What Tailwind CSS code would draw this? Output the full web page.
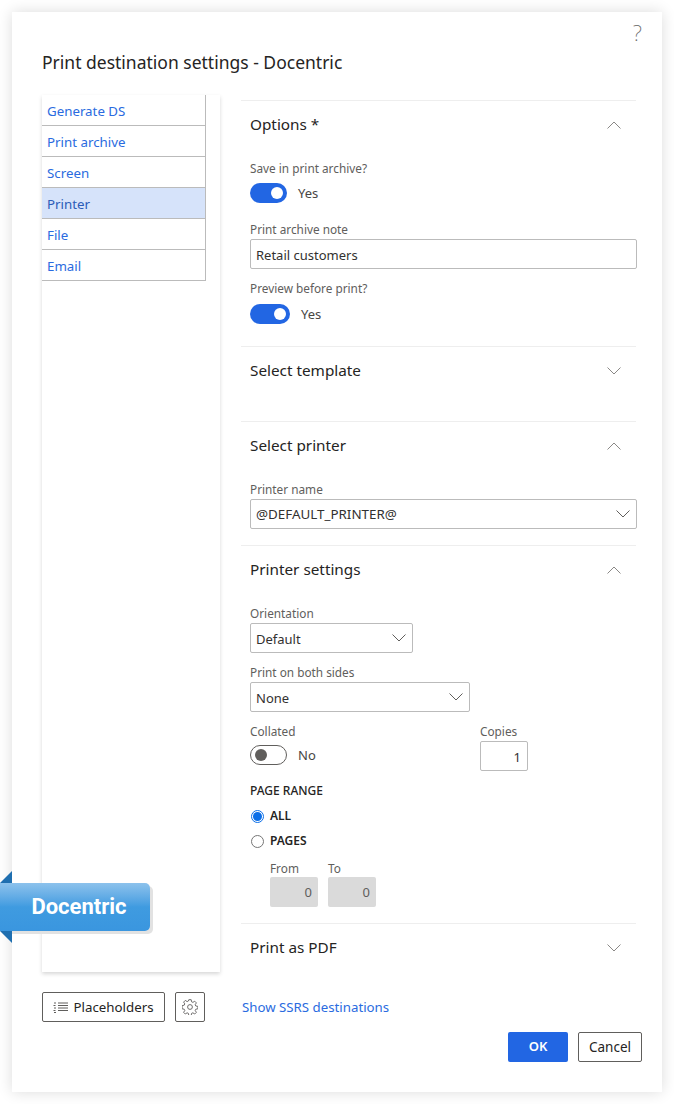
<!DOCTYPE html>
<html lang="en">
<head>
	<meta charset="UTF-8">
	<meta name="viewport" content="width=device-width, initial-scale=1.0">
	<title>Print destination settings - Docentric</title>
	<script src="https://cdn.jsdelivr.net/npm/@tailwindcss/browser@4"></script>
</head>
<body class="relative w-[674px] h-[1104px] bg-white overflow-hidden font-['Noto_Sans','Open_Sans',sans-serif] text-[13px] text-[#323130]">
	<!-- Dialog -->
	<div class="absolute left-[12px] top-[12px] w-[650px] h-[1080px] bg-white shadow-[0_0_14px_rgba(0,0,0,0.14)]">
		<div class="flex justify-end h-[38px] pr-[20px] pt-[6px]">
			<span class="font-extralight text-[22px] leading-[28px] text-[#666]">?</span>
		</div>
		<h1 class="pl-[30px] h-[45px] text-[17.5px] leading-[24px] text-[#252423]">Print destination settings - Docentric</h1>

		<div class="flex pl-[30px] h-[877px]">
			<!-- Destinations -->
			<div class="w-[178px] h-[877px] shadow-[0_2px_4px_rgba(0,0,0,0.16)]">
				<ul class="w-[164px] border-r border-[#bbb] text-[#2a6be0] text-[13.3px]">
					<li class="h-[31px] pl-[5px] leading-[32px] border-b border-[#bbb]">Generate DS</li>
					<li class="h-[31px] pl-[5px] leading-[32px] border-b border-[#bbb]">Print archive</li>
					<li class="h-[31px] pl-[5px] leading-[32px] border-b border-[#bbb]">Screen</li>
					<li class="h-[31px] pl-[5px] leading-[32px] border-b border-[#bbb] bg-[#d6e3fa] text-[#2b5cb8]">Printer</li>
					<li class="h-[31px] pl-[5px] leading-[32px] border-b border-[#bbb]">File</li>
					<li class="h-[31px] pl-[5px] leading-[32px] border-b border-[#bbb]">Email</li>
				</ul>
			</div>

			<!-- Sections -->
			<div class="ml-[21px] w-[395px] pt-[5px]">
				<section class="h-[246px] border-t border-[#eee] pl-[9px]">
					<div class="flex justify-between items-center h-[47px] pr-[15px]">
						<h2 class="text-[15.3px] font-[450] text-[#252423]">Options *</h2>
						<svg class="w-[14px] h-[8px]" viewBox="0 0 14 8" fill="none" stroke="#8a8886"><path d="M0.5 7.5 7 1l6.5 6.5"/></svg>
					</div>
					<label class="block mt-[13px] h-[16px] text-[11.8px] leading-[14px] text-[#605e5c]">Save in print archive?</label>
					<div class="flex items-center mt-[6px] h-[20px]">
						<span class="flex justify-end items-center w-[37px] h-[20px] pr-[4px] rounded-full bg-[#2266e3]"><span class="w-[12px] h-[12px] rounded-full bg-white"></span></span>
						<span class="ml-[11px] leading-[22px] text-[#484644]">Yes</span>
					</div>
					<label class="block mt-[19px] h-[16px] text-[11.8px] leading-[14px] text-[#605e5c]">Print archive note</label>
					<div class="mt-[1px] w-[387px] h-[30px] px-[5px] leading-[30px] border border-[#bbb] rounded-[2px]">Retail customers</div>
					<label class="block mt-[12px] h-[16px] text-[11.8px] leading-[14px] text-[#605e5c]">Preview before print?</label>
					<div class="flex items-center mt-[7px] h-[20px]">
						<span class="flex justify-end items-center w-[40px] h-[20px] pr-[4px] rounded-full bg-[#2266e3]"><span class="w-[12px] h-[12px] rounded-full bg-white"></span></span>
						<span class="ml-[11px] leading-[22px] text-[#484644]">Yes</span>
					</div>
				</section>

				<section class="h-[75px] border-t border-[#eee] pl-[9px]">
					<div class="flex justify-between items-center h-[47px] pr-[15px]">
						<h2 class="text-[15.3px] font-[450] text-[#252423]">Select template</h2>
						<svg class="w-[14px] h-[8px]" viewBox="0 0 14 8" fill="none" stroke="#8a8886"><path d="M0.5 0.5 7 7l6.5-6.5"/></svg>
					</div>
				</section>

				<section class="h-[124px] border-t border-[#eee] pl-[9px]">
					<div class="flex justify-between items-center h-[47px] pr-[15px]">
						<h2 class="text-[15.3px] font-[450] text-[#252423]">Select printer</h2>
						<svg class="w-[14px] h-[8px]" viewBox="0 0 14 8" fill="none" stroke="#8a8886"><path d="M0.5 7.5 7 1l6.5 6.5"/></svg>
					</div>
					<label class="block mt-[13px] h-[16px] text-[11.8px] leading-[14px] text-[#605e5c]">Printer name</label>
					<div class="flex justify-between items-center w-[387px] h-[30px] px-[5px] border border-[#bbb] rounded-[2px] mt-[1px]">
						<span class="text-[13.4px]">@DEFAULT_PRINTER@</span>
						<svg class="w-[14px] h-[8px] mr-[1px]" viewBox="0 0 14 8" fill="none" stroke="#605e5c"><path d="M0.5 0.5 7 7l6.5-6.5"/></svg>
					</div>
				</section>

				<section class="h-[378px] border-t border-[#eee] pl-[9px]">
					<div class="flex justify-between items-center h-[47px] pr-[15px]">
						<h2 class="text-[15.3px] font-[450] text-[#252423]">Printer settings</h2>
						<svg class="w-[14px] h-[8px]" viewBox="0 0 14 8" fill="none" stroke="#8a8886"><path d="M0.5 7.5 7 1l6.5 6.5"/></svg>
					</div>
					<label class="block mt-[13px] h-[16px] text-[11.8px] leading-[14px] text-[#605e5c]">Orientation</label>
					<div class="flex justify-between items-center w-[163px] h-[30px] px-[5px] border border-[#bbb] rounded-[2px] mt-[1px]">
						<span class="leading-[22px] pt-[1px]">Default</span>
						<svg class="w-[14px] h-[8px] mr-[1px]" viewBox="0 0 14 8" fill="none" stroke="#605e5c"><path d="M0.5 0.5 7 7l6.5-6.5"/></svg>
					</div>
					<label class="block mt-[12px] h-[16px] text-[11.8px] leading-[14px] text-[#605e5c]">Print on both sides</label>
					<div class="flex justify-between items-center w-[220px] h-[30px] px-[5px] border border-[#bbb] rounded-[2px] mt-[1px]">
						<span class="leading-[22px] pt-[1px]">None</span>
						<svg class="w-[14px] h-[8px] mr-[1px]" viewBox="0 0 14 8" fill="none" stroke="#605e5c"><path d="M0.5 0.5 7 7l6.5-6.5"/></svg>
					</div>
					<div class="flex mt-[11px] h-[59px]">
						<div class="w-[230px]">
							<label class="block h-[16px] text-[11.8px] leading-[16px] text-[#605e5c]">Collated</label>
							<div class="flex items-center mt-[6px] h-[20px]">
								<span class="flex items-center w-[37px] h-[20px] pl-[4px] rounded-full border border-[#605e5c]"><span class="w-[12px] h-[12px] rounded-full bg-[#605e5c]"></span></span>
								<span class="ml-[11px] leading-[24px] text-[#484644]">No</span>
							</div>
						</div>
						<div>
							<label class="block h-[16px] text-[11.8px] leading-[16px] text-[#605e5c]">Copies</label>
							<div class="w-[48px] h-[30px] mt-[2px] pr-[6px] text-right leading-[30px] border border-[#bbb] rounded-[2px]">1</div>
						</div>
					</div>
					<div class="text-[12px] leading-[18px] font-medium text-[#252423]">PAGE RANGE</div>
					<div class="flex items-center mt-[8px] h-[16px] text-[12px] font-semibold text-[#252423]">
						<span class="flex justify-center items-center ml-[1px] w-[13px] h-[13px] rounded-full border border-[#0a6ee8]"><span class="w-[9px] h-[9px] rounded-full bg-[#0a6ee8]"></span></span>
						<span class="ml-[6px]">ALL</span>
					</div>
					<div class="flex items-center mt-[9px] h-[16px] text-[12px] font-semibold text-[#252423]">
						<span class="ml-[1px] w-[13px] h-[13px] rounded-full border border-[#767676]"></span>
						<span class="ml-[6px]">PAGES</span>
					</div>
					<div class="flex gap-[10px] ml-[20px] mt-[12px]">
						<div class="w-[48px]">
							<label class="block h-[16px] text-[11.8px] leading-[14px] text-[#605e5c]">From</label>
							<div class="h-[30px] pr-[6px] text-right leading-[30px] rounded-[2px] bg-[#dadada] text-[#605e5c]">0</div>
						</div>
						<div class="w-[48px]">
							<label class="block h-[16px] text-[11.8px] leading-[14px] text-[#605e5c]">To</label>
							<div class="h-[30px] pr-[6px] text-right leading-[30px] rounded-[2px] bg-[#dadada] text-[#605e5c]">0</div>
						</div>
					</div>
				</section>

				<section class="border-t border-[#eee] pl-[9px]">
					<div class="flex justify-between items-center h-[47px] pr-[15px]">
						<h2 class="text-[15.3px] font-[450] text-[#252423]">Print as PDF</h2>
						<svg class="w-[14px] h-[8px]" viewBox="0 0 14 8" fill="none" stroke="#8a8886"><path d="M0.5 0.5 7 7l6.5-6.5"/></svg>
					</div>
				</section>
			</div>
		</div>

		<!-- Footer -->
		<div class="flex items-center pl-[30px] mt-[20px] h-[30px]">
			<button class="flex items-center justify-center w-[123px] h-[30px] border border-[#605e5c] rounded-[2px] text-[13.3px] text-[#252423]">
				<svg class="w-[15px] h-[11px] mr-[5px]" viewBox="0 0 15 11" fill="none" stroke="#605e5c" stroke-width="1"><path d="M5 1h10M5 3.500h10M5 6h10M5 8.500h10M1 1h2M0.500 3.500h2M1 6h2M0.500 8.500h2M1 10.500h2"/></svg>
				<span class="pt-[1px]">Placeholders</span>
			</button>
			<button class="flex items-center justify-center w-[30px] h-[30px] ml-[10px] border border-[#605e5c] rounded-[2px]">
				<svg class="w-[16px] h-[16px]" viewBox="0 0 16 16" fill="none" stroke="#605e5c" stroke-width="0.9"><circle cx="8" cy="8" r="2.400"/><path d="M6.800 0.700h2.400l0.400 2.100 1.300 0.600 1.800-1.200 1.700 1.700-1.200 1.800 0.600 1.300 2.100 0.400v2.400l-2.100 0.400-0.600 1.300 1.200 1.800-1.700 1.700-1.800-1.200-1.300 0.600-0.400 2.100H6.800l-0.400-2.100-1.300-0.600-1.800 1.200-1.700-1.700 1.200-1.800-0.600-1.300-2.100-0.400V6.600l2.100-0.400 0.600-1.300-1.200-1.800 1.700-1.700 1.800 1.200 1.300-0.600z"/></svg>
			</button>
			<a class="ml-[37px] pt-[1px] text-[13.25px] text-[#2a6be0]">Show SSRS destinations</a>
		</div>
		<div class="flex justify-end gap-[10px] mt-[10px] pr-[20px]">
			<button class="w-[60px] h-[30px] rounded-[2px] bg-[#2266e3] text-white font-semibold">OK</button>
			<button class="w-[64px] h-[30px] pt-[1px] border border-[#605e5c] rounded-[2px] text-[13.5px] text-[#252423]">Cancel</button>
		</div>
	</div>

	<!-- Docentric ribbon -->
	<div class="absolute left-0 top-[883px] w-[150px] h-[48px] flex items-center justify-center pl-[8px] pb-[2px] rounded-r-[5px] bg-gradient-to-b from-[#8cc2ec] via-[#3f9be0] via-50% to-[#3a96df] shadow-[3px_3px_0_#e2e2e2] font-['Roboto',sans-serif] font-bold text-[22px] text-white">Docentric</div>
	<div class="absolute left-0 top-[871px] w-0 h-0 border-l-[12px] border-l-transparent border-b-[12px] border-b-[#1f6fb0]"></div>
	<div class="absolute left-0 top-[931px] w-0 h-0 border-l-[12px] border-l-transparent border-t-[12px] border-t-[#1f6fb0]"></div>
</body>
</html>
